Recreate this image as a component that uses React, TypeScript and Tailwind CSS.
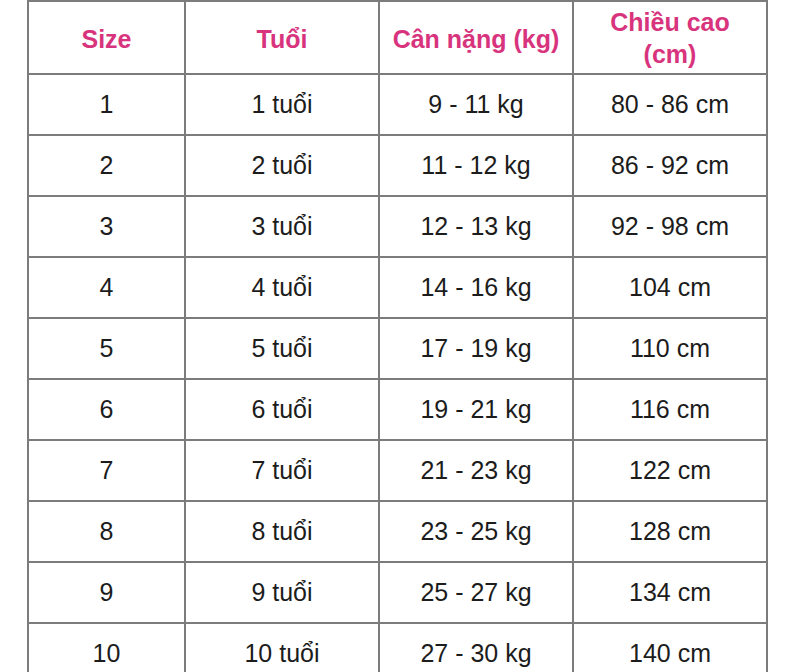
import React from "react";

const rows = [
  ["1", "1 tuổi", "9 - 11 kg", "80 - 86 cm"],
  ["2", "2 tuổi", "11 - 12 kg", "86 - 92 cm"],
  ["3", "3 tuổi", "12 - 13 kg", "92 - 98 cm"],
  ["4", "4 tuổi", "14 - 16 kg", "104 cm"],
  ["5", "5 tuổi", "17 - 19 kg", "110 cm"],
  ["6", "6 tuổi", "19 - 21 kg", "116 cm"],
  ["7", "7 tuổi", "21 - 23 kg", "122 cm"],
  ["8", "8 tuổi", "23 - 25 kg", "128 cm"],
  ["9", "9 tuổi", "25 - 27 kg", "134 cm"],
  ["10", "10 tuổi", "27 - 30 kg", "140 cm"],
];

export default function App() {
  return (
    <div
      className="w-[800px] h-[672px] overflow-hidden bg-white"
      style={{ fontFamily: '"Liberation Sans", Arial, sans-serif' }}
    >
      <div className="ml-[27px] w-[741px] grid grid-cols-[155px_192px_192px_192px] gap-[2px] p-[2px] bg-[#7c7c7c]">
        <div className="h-[71px] bg-white flex items-center justify-center pt-[4px] text-[25px] font-bold text-[#d8347d]">
          Size
        </div>
        <div className="h-[71px] bg-white flex items-center justify-center pt-[4px] text-[25px] font-bold text-[#d8347d]">
          Tuổi
        </div>
        <div className="h-[71px] bg-white flex items-center justify-center pt-[4px] text-[25px] font-bold text-[#d8347d]">
          Cân nặng (kg)
        </div>
        <div className="h-[71px] bg-white flex flex-col items-center justify-center text-[25px] leading-[32px] font-bold text-[#d8347d]">
          <span>Chiều cao</span>
          <span>(cm)</span>
        </div>
        {rows.map((r, i) => (
          <React.Fragment key={i}>
            {r.map((c, j) => (
              <div
                key={j}
                className="h-[59px] bg-white flex items-center justify-center text-[25px] text-[#1c1c1c]"
              >
                {c}
              </div>
            ))}
          </React.Fragment>
        ))}
      </div>
    </div>
  );
}
